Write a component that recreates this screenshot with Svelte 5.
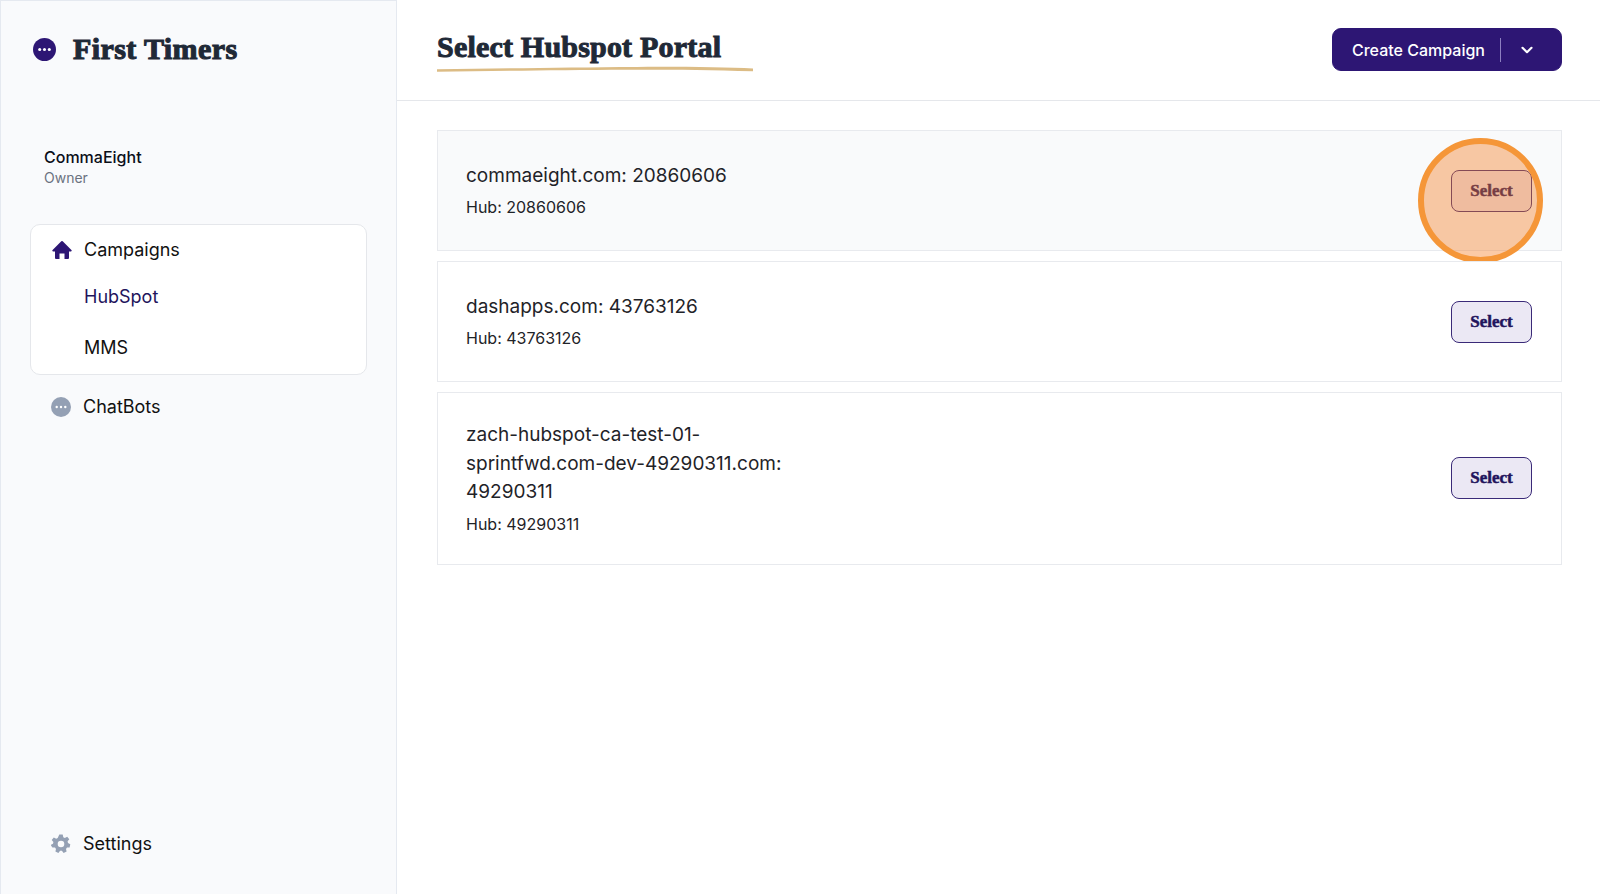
<script>
  const portals = [
    { name: 'commaeight.com: 20860606', hub: '20860606', active: true },
    { name: 'dashapps.com: 43763126', hub: '43763126', active: false },
    { name: 'zach-hubspot-ca-test-01-sprintfwd.com-dev-49290311.com: 49290311', hub: '49290311', active: false }
  ];
</script>

<div class="page">
  <aside class="sidebar">
    <div class="brand">
      <svg class="brand-icon" viewBox="0 0 24 24"><circle cx="12" cy="12" r="12" fill="#2d1674" /><circle cx="7" cy="12" r="1.6" fill="#fff" /><circle cx="12" cy="12" r="1.6" fill="#fff" /><circle cx="17" cy="12" r="1.6" fill="#fff" /></svg>
      <span class="brand-name">First Timers</span>
    </div>
    <div class="account">
      <div class="account-name">CommaEight</div>
      <div class="account-role">Owner</div>
    </div>
    <nav class="group">
      <div class="nav-row top">
        <svg class="nav-icon" viewBox="0 0 20 20"><path fill="#2d1674" d="M10.7 1.3a1 1 0 0 0-1.4 0L.6 10a.8.8 0 0 0 .6 1.4H3V18a1 1 0 0 0 1 1h3.5v-5.5h5V19H16a1 1 0 0 0 1-1v-6.6h1.800a.8.8 0 0 0 .6-1.400z" /></svg>
        <span>Campaigns</span>
      </div>
      <div class="sub hub">HubSpot</div>
      <div class="sub">MMS</div>
    </nav>
    <div class="nav-row chat">
      <svg class="nav-icon" viewBox="0 0 20 20"><circle cx="10" cy="10" r="10" fill="#94a0b4" /><circle cx="5.700" cy="10" r="1.200" fill="#fff" /><circle cx="10" cy="10" r="1.200" fill="#fff" /><circle cx="14.300" cy="10" r="1.200" fill="#fff" /></svg>
      <span>ChatBots</span>
    </div>
    <div class="nav-row settings">
      <svg class="nav-icon" viewBox="0 0 20 20"><path fill="#94a0b4" fill-rule="evenodd" d="M8.300.6h3.400l.6 2.600 1.500.7 2.400-1.200 2.100 2.600-1.700 2 .4 1.700 2.300 1.200-.7 3.300-2.600.1-1 1.300.6 2.600-3 1.400-1.700-2.100h-1.800l-1.700 2.100-3-1.400.6-2.600-1-1.300-2.600-.1L-.3 11l2.300-1.200.4-1.700-1.700-2 2.100-2.600 2.400 1.200 1.500-.7zM10 6.700a3.300 3.300 0 1 0 0 6.600 3.300 3.300 0 0 0 0-6.600z" /></svg>
      <span>Settings</span>
    </div>
  </aside>

  <main class="main">
    <header class="header">
      <div class="title-wrap">
        <h1>Select Hubspot Portal</h1>
        <svg class="underline" viewBox="0 0 316 6" preserveAspectRatio="none"><path fill="#dcbc85" d="M0 3.200C70 2.500 130 1.300 200 .9c50-.2 90 .3 116 1.600V5.300C270 3.800 230 3.600 190 3.700 120 3.900 60 5 0 5.800z" /></svg>
      </div>
      <button class="create">
        <span class="create-label">Create Campaign</span>
        <span class="divider"></span>
        <svg class="chevron" viewBox="0 0 16 16"><path d="M3.500 5.800 8 10.200l4.500-4.400" fill="none" stroke="#fff" stroke-width="2.200" stroke-linecap="round" stroke-linejoin="round" /></svg>
      </button>
    </header>

    <section class="list">
      {#each portals as p}
        <article class="card" class:active={p.active}>
          <div class="info">
            <div class="name">{p.name}</div>
            <div class="hubline">Hub: {p.hub}</div>
          </div>
          <button class="select">Select</button>
          {#if p.active}<span class="spot"></span>{/if}
        </article>
      {/each}
    </section>
  </main>
</div>

<style>
  :global(body) { margin: 0; background: #fff; }
  .page { display: flex; height: 894px; overflow: hidden; font-family: Inter, "Liberation Sans", sans-serif; color: #111827; }
  .sidebar { width: 397px; flex: none; box-sizing: border-box; display: flex; flex-direction: column; background: #f9fafc; border: 1px solid #e5e9f0; border-bottom: 0; padding: 0 29px; }
  .brand { display: flex; align-items: center; gap: 17px; height: 96px; padding-left: 3px; }
  .brand-icon { width: 23px; height: 23px; flex: none; }
  .brand-name { font-family: "Liberation Serif", serif; font-weight: 700; font-size: 30px; letter-spacing: .4px; color: #1f2937; -webkit-text-stroke: 1.100px #1f2937; }
  .account { padding: 49px 0 0 14px; height: 127px; box-sizing: border-box; }
  .account-name { font-size: 16px; font-weight: 500; line-height: 22px; color: #0b0f19; }
  .account-role { font-size: 14px; line-height: 20px; color: #6b7280; }
  .group { box-sizing: border-box; height: 151px; background: #fff; border: 1px solid #e5e7eb; border-radius: 10px; padding: 11px 21px 0 21px; }
  .nav-row { display: flex; align-items: center; gap: 12px; font-size: 18px; line-height: 28px; color: #111; }
  .nav-icon { width: 20px; height: 20px; flex: none; }
  .sub { font-size: 18px; line-height: 28px; padding-left: 32px; color: #111; margin-top: 23px; }
  .sub.hub { color: #22145c; margin-top: 19px; }
  .chat { margin: 18px 0 0 21px; }
  .settings { margin: auto 0 36px 21px; }
  .main { flex: 1; min-width: 0; display: flex; flex-direction: column; }
  .header { box-sizing: border-box; height: 101px; flex: none; display: flex; justify-content: space-between; align-items: flex-start; padding: 28px 38px 0 40px; border-bottom: 1px solid #e5e7eb; }
  .title-wrap { width: 316px; }
  h1 { margin: 0; font-family: "Liberation Serif", serif; font-weight: 700; font-size: 30px; line-height: 38px; letter-spacing: .2px; white-space: nowrap; color: #1f2937; -webkit-text-stroke: 1px #1f2937; }
  .underline { display: block; width: 316px; height: 6px; margin-top: 0; }
  .create { box-sizing: border-box; width: 230px; height: 43px; display: flex; align-items: center; padding: 0 0 0 19px; background: #2d1674; border: 1px solid #2d1674; border-radius: 9px; font-family: inherit; color: #fff; }
  .create-label { font-size: 16px; font-weight: 500; white-space: nowrap; }
  .divider { width: 1px; height: 24px; background: #8d7fc0; margin-left: 15px; }
  .chevron { width: 16px; height: 16px; margin-left: 18px; }
  .list { display: flex; flex-direction: column; gap: 10px; padding: 29px 38px 0 40px; }
  .card { position: relative; box-sizing: border-box; min-height: 121px; display: flex; align-items: center; justify-content: space-between; padding: 0 29px 0 28px; border: 1.500px solid #e8eaee; background: #fff; }
  .card.active { background: #f9fafb; }
  .info { width: 320px; padding: 28px 0; }
  .name { font-size: 19px; line-height: 28.500px; color: #1f2328; }
  .hubline { font-size: 16px; line-height: 24px; color: #1f2328; margin-top: 5px; }
  .select { box-sizing: border-box; width: 81px; height: 42px; flex: none; background: #ebe8f4; border: 1px solid #3a2a78; border-radius: 8px; font-family: "Liberation Serif", serif; font-weight: 700; font-size: 17px; color: #22145c; -webkit-text-stroke: .5px #22145c; }
  .spot { position: absolute; left: 980px; top: 7px; width: 125px; height: 125px; box-sizing: border-box; border-radius: 50%; border: 6px solid #f59638; background: rgba(244, 123, 32, .4); }
</style>
